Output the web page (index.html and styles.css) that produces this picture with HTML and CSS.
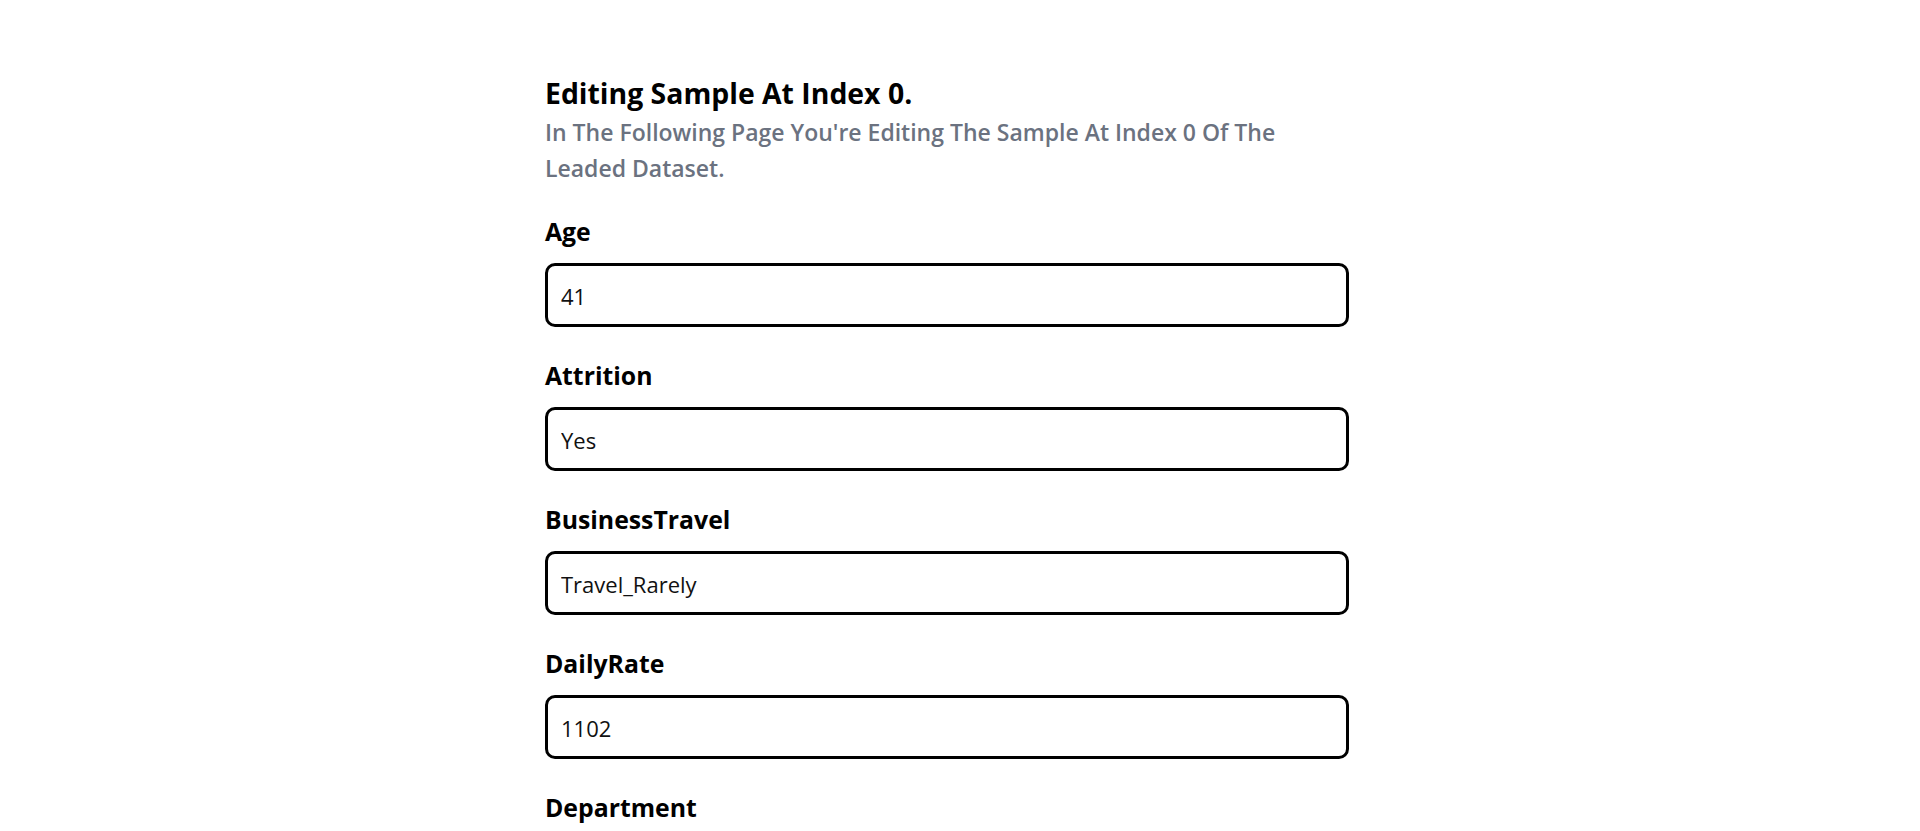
FILE: index.html
```html
<!DOCTYPE html>
<html lang="en">
<head>
<meta charset="utf-8">
<title>Edit Sample</title>
<link rel="stylesheet" href="styles.css">
</head>
<body>
<main class="wrap">
  <header class="intro">
    <h1 class="title">Editing Sample At Index 0.</h1>
    <p class="subtitle">In The Following Page You're Editing The Sample At Index 0 Of The Leaded Dataset.</p>
  </header>
  <form class="form">
    <div class="field"><label class="label">Age</label><input class="input" value="41"></div>
    <div class="field"><label class="label">Attrition</label><input class="input" value="Yes"></div>
    <div class="field"><label class="label">BusinessTravel</label><input class="input" value="Travel_Rarely"></div>
    <div class="field"><label class="label">DailyRate</label><input class="input" value="1102"></div>
    <div class="field"><label class="label">Department</label><input class="input" value="Sales"></div>
    <div class="field"><label class="label">DistanceFromHome</label><input class="input" value="1"></div>
    <div class="field"><label class="label">Education</label><input class="input" value="2"></div>
  </form>
</main>
</body>
</html>
```
FILE: styles.css
```css
html, body {
  margin: 0;
  padding: 0;
  background: #ffffff;
}
body {
  font-family: "Open Sans", "Noto Sans", sans-serif;
  color: #000;
}
.wrap {
  width: 830px;
  margin: 0 auto;
  padding-top: 72px;
}
.intro {
  width: 804px;
}
.title {
  margin: 0;
  font-size: 28.4px;
  line-height: 42px;
  font-weight: 700;
  color: #000;
}
.subtitle {
  margin: 0;
  font-size: 23px;
  line-height: 36px;
  font-weight: 600;
  color: #6b7280;
}
.form {
  width: 804px;
  display: flex;
  flex-direction: column;
  gap: 27px;
  margin-top: 24px;
}
.field {
  display: flex;
  flex-direction: column;
  gap: 11px;
}
.label {
  font-size: 24.8px;
  line-height: 42px;
  font-weight: 700;
}
.input {
  box-sizing: border-box;
  height: 64px;
  width: 100%;
  margin: 0;
  border: 3px solid #000;
  border-radius: 10px;
  padding: 2px 13px 0;
  font-family: "Open Sans", "Noto Sans", sans-serif;
  font-size: 22px;
  color: #111;
  background: #fff;
  outline: none;
}
```
